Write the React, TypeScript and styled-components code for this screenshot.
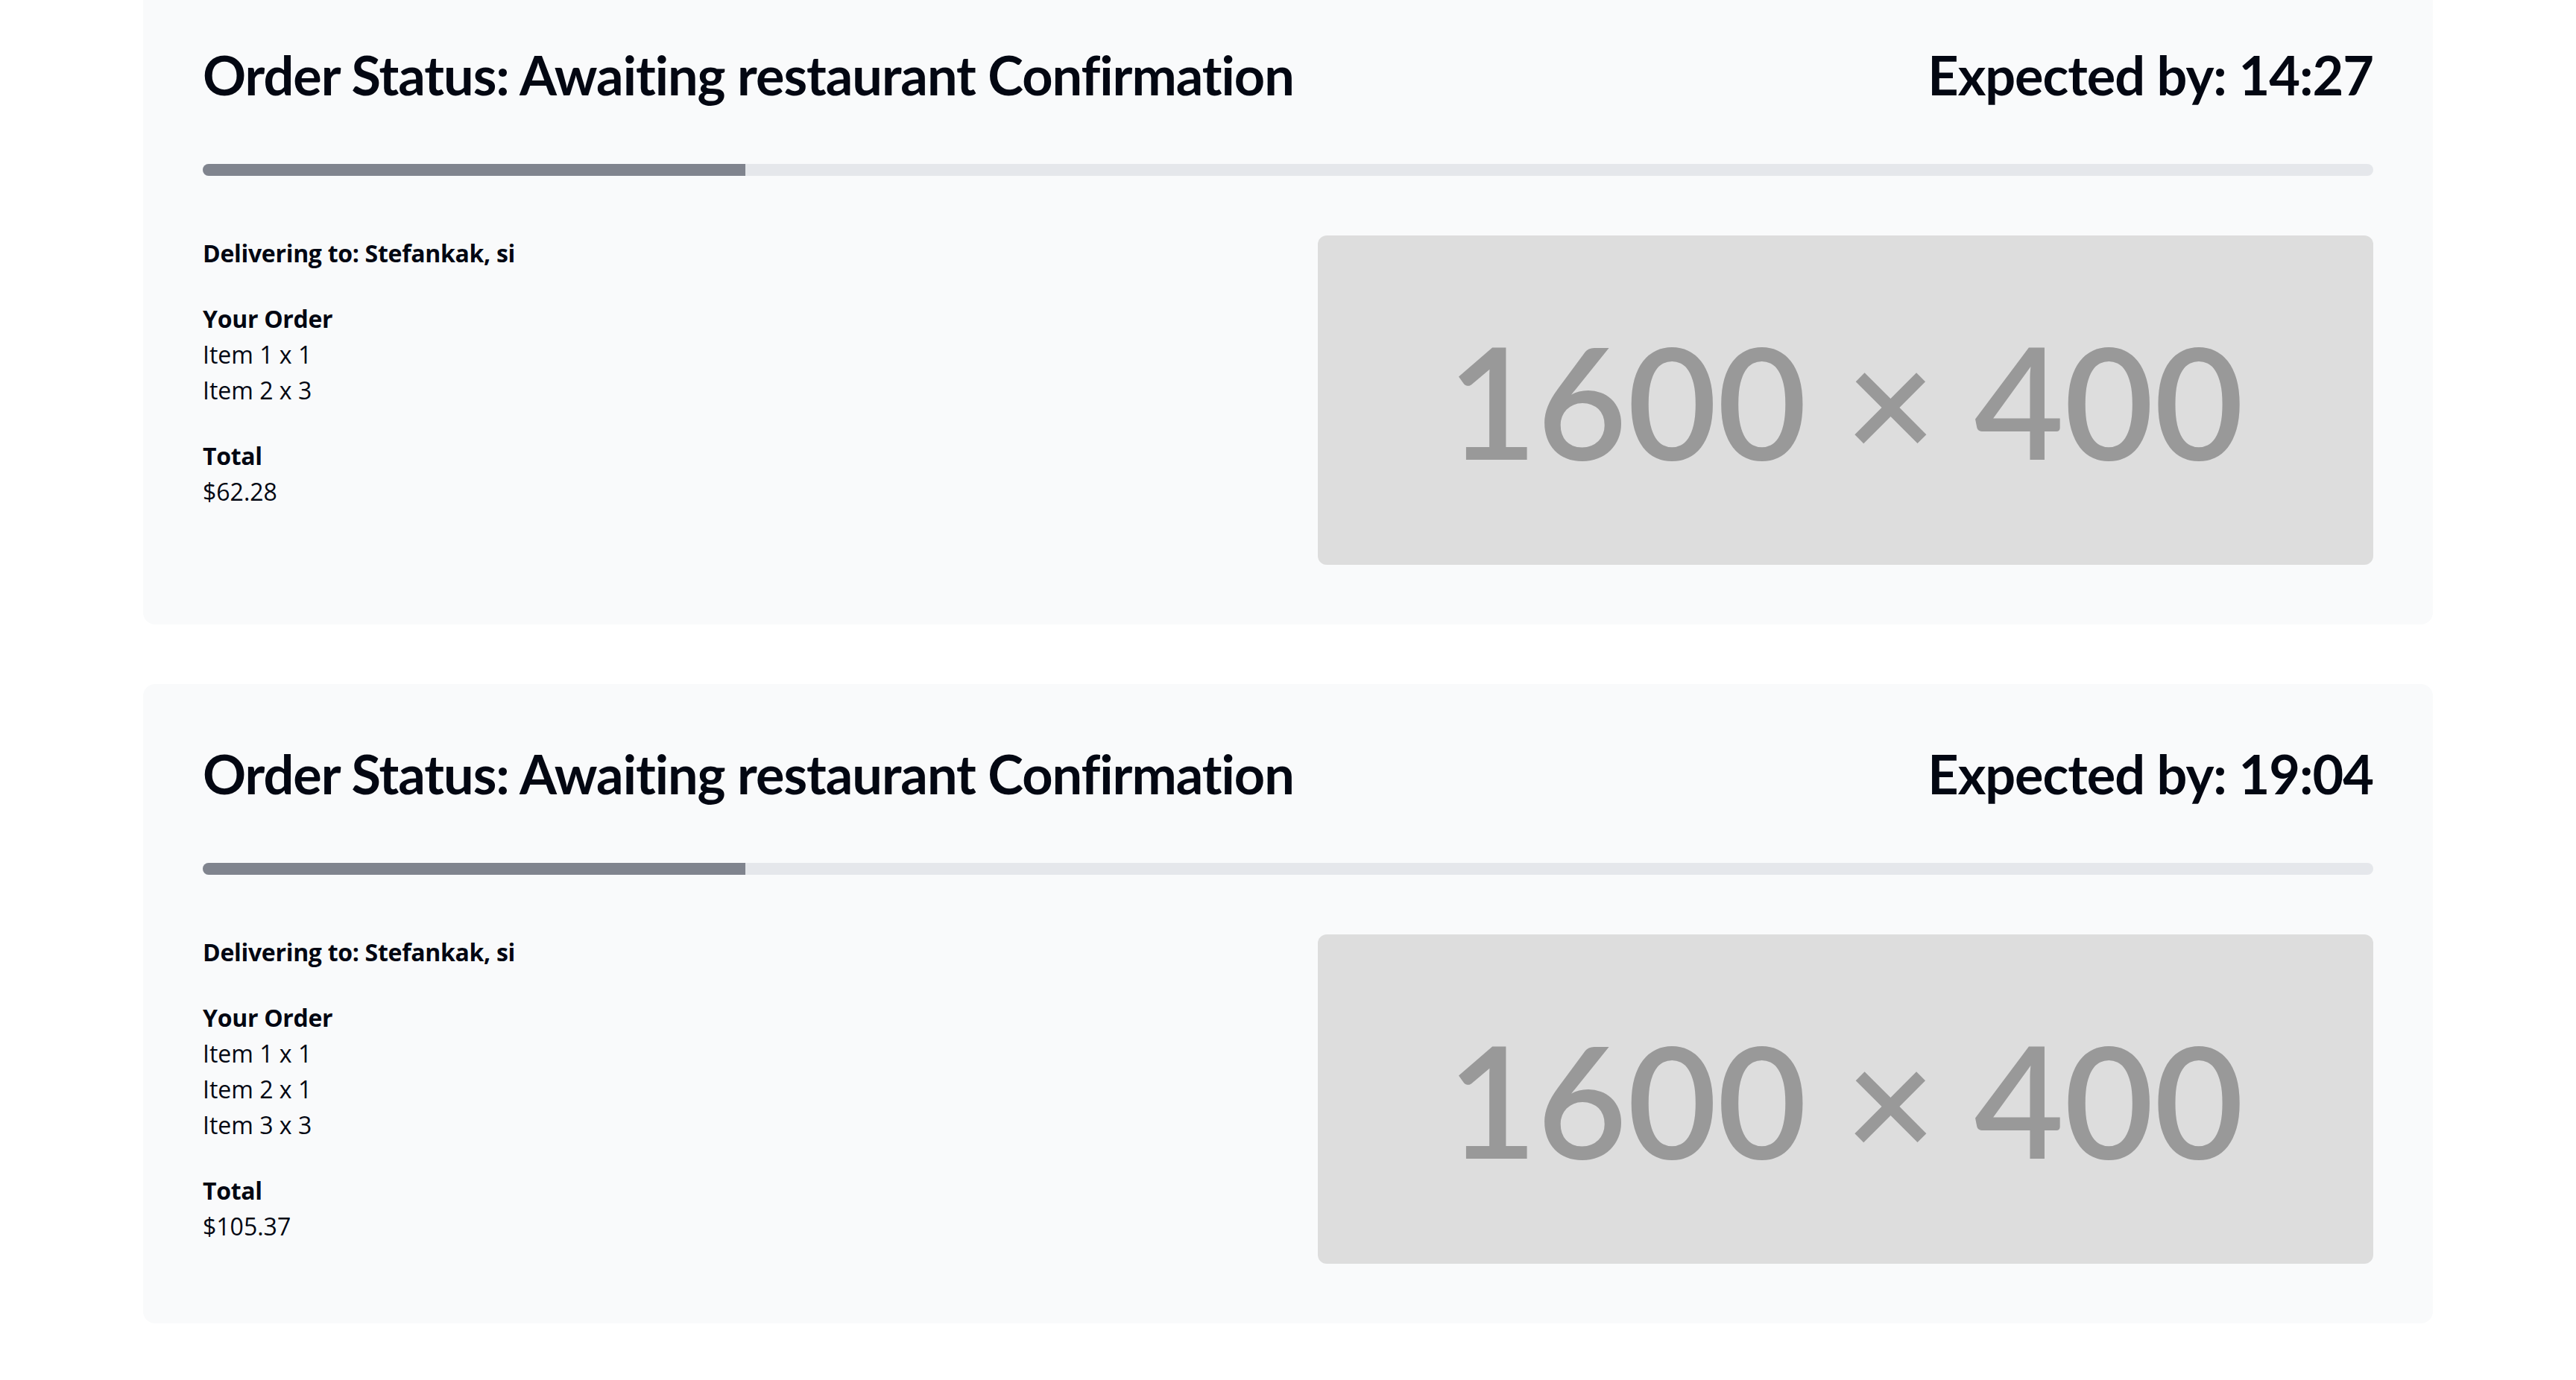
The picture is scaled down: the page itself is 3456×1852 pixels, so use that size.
import styled, { createGlobalStyle } from 'styled-components';

type Order = {
  id: number;
  expected: string;
  address: string;
  items: { name: string; qty: number }[];
  total: string;
  progress: number;
};

const orders: Order[] = [
  {
    id: 1,
    expected: '14:27',
    address: 'Stefankak, si',
    items: [
      { name: 'Item 1', qty: 1 },
      { name: 'Item 2', qty: 3 },
    ],
    total: '$62.28',
    progress: 25,
  },
  {
    id: 2,
    expected: '19:04',
    address: 'Stefankak, si',
    items: [
      { name: 'Item 1', qty: 1 },
      { name: 'Item 2', qty: 1 },
      { name: 'Item 3', qty: 3 },
    ],
    total: '$105.37',
    progress: 25,
  },
];

const GlobalStyle = createGlobalStyle`
  body {
    margin: 0;
    background: #ffffff;
    font-family: "Open Sans", "Noto Sans", sans-serif;
    color: #030712;
  }
`;

const OrderCard = ({ order }: { order: Order }) => {
  return (
    <Card>
      <CardHeader>
        <Title>Order Status: Awaiting restaurant Confirmation</Title>
        <Title>Expected by: {order.expected}</Title>
      </CardHeader>

      <ProgressTrack>
        <ProgressFill $percent={order.progress} />
      </ProgressTrack>

      <CardBody>
        <Details>
          <Label>Delivering to: {order.address}</Label>
          <Section>
            <Label>Your Order</Label>
            {order.items.map((item) => (
              <Line key={item.name}>
                {item.name} x {item.qty}
              </Line>
            ))}
          </Section>
          <Section>
            <Label>Total</Label>
            <Line>{order.total}</Line>
          </Section>
        </Details>
        <Placeholder>1600 × 400</Placeholder>
      </CardBody>
    </Card>
  );
};

export default function App() {
  return (
    <>
      <GlobalStyle />
      <Page>
        {orders.map((order) => (
          <OrderCard key={order.id} order={order} />
        ))}
      </Page>
    </>
  );
}

const Page = styled.main`
  max-width: 3072px;
  margin: -20px auto 0;
  display: flex;
  flex-direction: column;
  gap: 80px;
`;

const Card = styled.section`
  background-color: #f9fafb;
  border-radius: 16px;
  padding: 80px;
  display: flex;
  flex-direction: column;
  gap: 80px;
`;

const CardHeader = styled.header`
  display: flex;
  justify-content: space-between;
  align-items: center;
`;

const Title = styled.h2`
  margin: 0;
  font-family: Lato, "Open Sans", sans-serif;
  font-size: 72px;
  line-height: 80px;
  font-weight: 700;
  letter-spacing: -1px;
  color: #030712;
`;

const ProgressTrack = styled.div`
  height: 16px;
  border-radius: 9999px;
  background-color: #e5e7eb;
  overflow: hidden;
`;

const ProgressFill = styled.div<{ $percent: number }>`
  height: 100%;
  width: ${({ $percent }) => $percent}%;
  background-color: #80848e;
`;

const CardBody = styled.div`
  display: grid;
  grid-template-columns: 1fr 1fr;
  gap: 80px;
  align-items: start;
`;

const Details = styled.div`
  display: flex;
  flex-direction: column;
  gap: 40px;
`;

const Section = styled.div`
  display: flex;
  flex-direction: column;
`;

const Label = styled.p`
  margin: 0;
  font-size: 32px;
  line-height: 48px;
  font-weight: 700;
  letter-spacing: -0.3px;
`;

const Line = styled.p`
  margin: 0;
  font-size: 32px;
  line-height: 48px;
  font-weight: 400;
`;

const Placeholder = styled.div`
  height: 442px;
  border-radius: 12px;
  background-color: #dddddd;
  color: #999999;
  display: flex;
  align-items: center;
  justify-content: center;
  font-family: Lato, "Open Sans", sans-serif;
  font-size: 208px;
  font-weight: 600;
  line-height: 1;
`;
